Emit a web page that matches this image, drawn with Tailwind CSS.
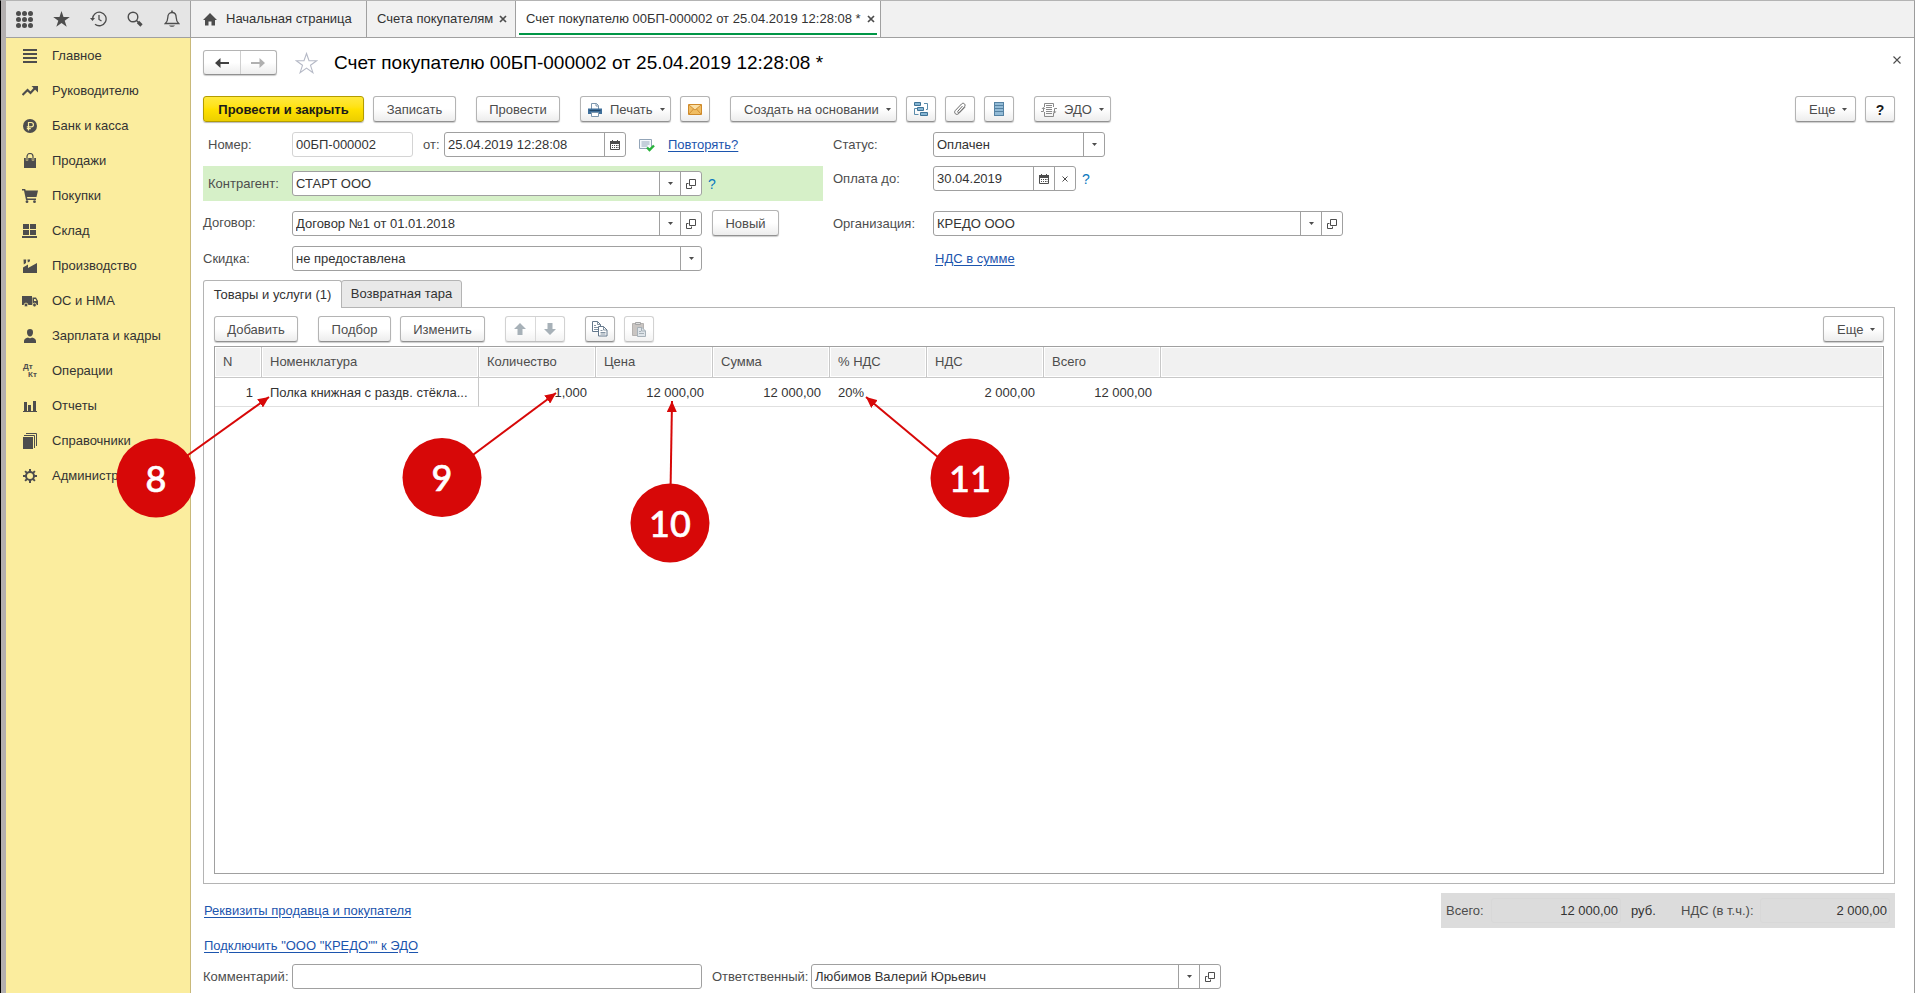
<!DOCTYPE html>
<html lang="ru">
<head>
<meta charset="utf-8">
<meta name="viewport" content="width=device-width, initial-scale=1">
<title>Счет покупателю 00БП-000002</title>
<script src="https://cdn.jsdelivr.net/npm/@tailwindcss/browser@4"></script>
</head>
<body class="bg-white font-['Liberation_Sans',Arial,sans-serif] text-[13px] leading-4 text-[#4d4d4d]">

<!-- Shared icons -->
<svg class="hidden" aria-hidden="true">
  <symbol id="caret" viewBox="0 0 5 3"><path d="M0 0h5L2.500 3z" fill="#4d4d4d"/></symbol>
  <symbol id="open" viewBox="0 0 10 10"><path d="M3.500.5h6v6h-6zM2.500 4.500h-2v5h5v-2" fill="none" stroke="#4d4d4d"/></symbol>
  <symbol id="calendar" viewBox="0 0 10 10"><path d="M.5 2h9v7.500h-9z" fill="none" stroke="#4d4d4d"/><path d="M0 1h10v3H0zM2 0h1v2H2zM7 0h1v2H7zM2 5h1v1H2zm2 0h1v1H4zm2 0h1v1H6zM2 7h1v1H2zm2 0h1v1H4zm2 0h1v1H6zm1.500-2h1v1h-1zm0 2h1v1h-1z" fill="#4d4d4d"/></symbol>
  <symbol id="cross" viewBox="0 0 8 8"><path d="M1 1l6 6M7 1L1 7" fill="none" stroke="#4d4d4d" stroke-width="1.700"/></symbol>
</svg>

<div class="relative flex min-h-screen flex-col border-t border-r border-l border-t-[#b4b4b4] border-r-[#9c9c9c] border-l-black">
<div class="flex flex-1 flex-col border-l-[5px] border-[#b3afaf]">

  <!-- Top bar -->
  <header class="flex h-[37px] border-b border-[#a0a0a0] bg-[#f1f1f1] text-[#333]">
    <div class="flex w-[185px] shrink-0 border-r border-[#a0a0a0] bg-[#e5e5e5]">
      <button class="flex w-[37px] items-center justify-center" aria-label="Меню">
        <svg width="17" height="17" viewBox="0 0 17 17" fill="#4d4d4d"><circle cx="2.500" cy="2.500" r="2.500"/><circle cx="8.500" cy="2.500" r="2.500"/><circle cx="14.500" cy="2.500" r="2.500"/><circle cx="2.500" cy="8.500" r="2.500"/><circle cx="8.500" cy="8.500" r="2.500"/><circle cx="14.500" cy="8.500" r="2.500"/><circle cx="2.500" cy="14.500" r="2.500"/><circle cx="8.500" cy="14.500" r="2.500"/><circle cx="14.500" cy="14.500" r="2.500"/></svg>
      </button>
      <button class="flex w-[37px] items-center justify-center" aria-label="Избранное">
        <svg width="17" height="16" viewBox="0 0 17 16"><path d="M8.500 0l2 6h6.300l-5.100 3.700 2 6.100-5.200-3.800-5.200 3.800 2-6.100L.2 6h6.300z" fill="#4d4d4d"/></svg>
      </button>
      <button class="flex w-[36px] items-center justify-center" aria-label="История">
        <svg width="17" height="16" viewBox="0 0 17 16" fill="none" stroke="#4d4d4d"><path d="M2.500 8A6.800 6.800 0 1 1 5 13.200" stroke-width="1.300"/><path d="M9 4v4.500l2.500 1.500" stroke-width="1.300"/><path d="M0 7h5L2.500 10z" fill="#4d4d4d" stroke="none"/></svg>
      </button>
      <button class="flex w-[37px] items-center justify-center" aria-label="Поиск">
        <svg width="16" height="16" viewBox="0 0 16 16" fill="none" stroke="#4d4d4d"><circle cx="6" cy="6" r="4.800" stroke-width="1.400"/><path d="M9.500 9.500l2 2" stroke-width="1.500"/><path d="M11 11l3.500 3.500" stroke-width="3.200"/></svg>
      </button>
      <button class="flex w-[37px] items-center justify-center" aria-label="Уведомления">
        <svg width="16" height="18" viewBox="0 0 16 18"><path d="M1.300 13.500c1.800-1.800 2.500-3 2.500-6 0-3 1.700-5 4.200-5s4.200 2 4.200 5c0 3 .7 4.200 2.500 6z" fill="none" stroke="#4d4d4d" stroke-width="1.300"/><path d="M7.200.5h1.600v2H7.200zM5 15.500h6c-1 1.700-5 1.700-6 0z" fill="#4d4d4d"/></svg>
      </button>
    </div>
    <nav class="flex">
      <a href="#" class="flex w-[176px] items-center border-r border-[#a0a0a0] pl-3">
        <svg class="mr-[9px]" width="14" height="13" viewBox="0 0 14 13"><path d="M7 0l7 7h-2v5.500H8.500v-4h-3v4H2V7H0z" fill="#4d4d4d"/></svg>
        Начальная страница
      </a>
      <div class="flex w-[149px] items-center border-r border-[#a0a0a0] pl-[10px]">
        <a href="#" class="whitespace-nowrap">Счета покупателям</a>
        <button class="ml-[6px]" aria-label="Закрыть вкладку"><svg width="8" height="8"><use href="#cross"/></svg></button>
      </div>
      <div class="relative flex w-[365px] items-center border-r border-[#a0a0a0] bg-white pl-[10px]">
        <a href="#" class="whitespace-nowrap">Счет покупателю 00БП-000002 от 25.04.2019 12:28:08 *</a>
        <button class="ml-[6px]" aria-label="Закрыть вкладку"><svg width="8" height="8"><use href="#cross"/></svg></button>
        <span class="absolute inset-x-[3px] bottom-[2px] h-[2px] bg-[#009646]"></span>
      </div>
    </nav>
  </header>

  <div class="flex flex-1">

    <!-- Sections -->
    <aside class="w-[185px] shrink-0 border-r border-[#c9b97a] bg-[#fbed9e] text-[#333]">
      <nav class="flex flex-col">
        <a href="#" class="flex h-[35px] items-center gap-[14px] pl-4"><svg width="16" height="16" viewBox="0 0 16 16" fill="#4d4d4d"><path d="M1 1h14v2H1zM1 5h14v2H1zM1 9h14v2H1zM1 13h14v2H1z"/></svg>Главное</a>
        <a href="#" class="flex h-[35px] items-center gap-[14px] pl-4"><svg width="16" height="16" viewBox="0 0 16 16"><path d="M.5 12l5-5 3 3 5-5.500" fill="none" stroke="#4d4d4d" stroke-width="2.200"/><path d="M9.500 3H16v6.500z" fill="#4d4d4d"/></svg>Руководителю</a>
        <a href="#" class="flex h-[35px] items-center gap-[14px] pl-4"><svg width="16" height="16" viewBox="0 0 16 16"><circle cx="8" cy="8" r="7" fill="#4d4d4d"/><path d="M6.500 12.500v-8h2.700a2.200 2.200 0 0 1 0 4.400H4.800M4.800 10.700h4" fill="none" stroke="#fbed9e" stroke-width="1.200"/></svg>Банк и касса</a>
        <a href="#" class="flex h-[35px] items-center gap-[14px] pl-4"><svg width="16" height="16" viewBox="0 0 16 16"><path d="M2 5h12v10H2z" fill="#4d4d4d"/><path d="M5 7.500V3.500a3 3 0 0 1 6 0v4" fill="none" stroke="#fbed9e" stroke-width="2.400"/><path d="M5 7V3.500a3 3 0 0 1 6 0V7" fill="none" stroke="#4d4d4d" stroke-width="1.200"/></svg>Продажи</a>
        <a href="#" class="flex h-[35px] items-center gap-[14px] pl-4"><svg width="16" height="16" viewBox="0 0 16 16" fill="#4d4d4d"><path d="M0 1h3.200l.5 1.500H16L14.500 9H5l.4 1.500H14V12H4L2 2.500H0z"/><circle cx="5" cy="13.700" r="1.400"/><circle cx="12.500" cy="13.700" r="1.400"/></svg>Покупки</a>
        <a href="#" class="flex h-[35px] items-center gap-[14px] pl-4"><svg width="16" height="16" viewBox="0 0 16 16" fill="#4d4d4d"><path d="M1 1h6v5H1zM8 1h6v5H8zM1 7h6v5H1zM8 7h6v5H8zM0 13h15v2H0z"/></svg>Склад</a>
        <a href="#" class="flex h-[35px] items-center gap-[14px] pl-4"><svg width="16" height="16" viewBox="0 0 16 16" fill="#4d4d4d"><path d="M1 15V9.500l5-3V10l9-5v10zM1.500 1.500h2.700L4 5 1.800 6.500zM5.500 1.500h2.600L7.800 3.500 5.800 4.500z"/></svg>Производство</a>
        <a href="#" class="flex h-[35px] items-center gap-[14px] pl-4"><svg width="16" height="16" viewBox="0 0 16 16"><path d="M0 3h10v9H0zM10.500 4.500H14l2 3.500v4h-5.500z" fill="#4d4d4d"/><path d="M12 6h1.500l1 2H12z" fill="#fbed9e"/><circle cx="4" cy="12" r="1.900" fill="#4d4d4d" stroke="#fbed9e" stroke-width=".8"/><circle cx="12.500" cy="12" r="1.900" fill="#4d4d4d" stroke="#fbed9e" stroke-width=".8"/></svg>ОС и НМА</a>
        <a href="#" class="flex h-[35px] items-center gap-[14px] pl-4"><svg width="16" height="16" viewBox="0 0 16 16" fill="#4d4d4d"><path d="M8 1c2 0 3 1.200 3 3.200C11 6.500 9.800 8.500 8 8.500S5 6.500 5 4.200C5 2.200 6 1 8 1zM2 15v-2c0-2 1.800-3 4-3.500 1 1 3 1 4 0 2.200.5 4 1.500 4 3.500v2z"/></svg>Зарплата и кадры</a>
        <a href="#" class="flex h-[35px] items-center gap-[14px] pl-4"><span class="flex h-4 w-4 flex-col text-[8px] leading-[8px] font-bold text-[#4d4d4d]" aria-hidden="true"><span class="pl-px">Дт</span><span class="pl-[6px]">Кт</span></span>Операции</a>
        <a href="#" class="flex h-[35px] items-center gap-[14px] pl-4"><svg width="16" height="16" viewBox="0 0 16 16" fill="#4d4d4d"><path d="M1 13h14v1H1zM2 4h3v9H2zM6 7h3v6H6zM11 3h3v10h-3z"/></svg>Отчеты</a>
        <a href="#" class="flex h-[35px] items-center gap-[14px] pl-4"><svg width="16" height="16" viewBox="0 0 16 16"><path d="M1 4h10v12H1z" fill="#4d4d4d"/><path d="M2 2.500h10.500V15M4 .5h10.500V13" fill="none" stroke="#4d4d4d"/></svg>Справочники</a>
        <a href="#" class="flex h-[35px] items-center gap-[14px] pl-4"><svg width="16" height="16" viewBox="0 0 16 16" fill="none" stroke="#4d4d4d"><circle cx="8" cy="8" r="4" stroke-width="2"/><path d="M8 1v3M8 12v3M1 8h3M12 8h3M3.100 3.100l2 2M10.900 10.900l2 2M3.100 12.900l2-2M10.900 5.100l2-2" stroke-width="2"/></svg>Администрирование</a>
      </nav>
    </aside>

    <main class="flex min-w-0 flex-1 flex-col pt-3 pr-[19px] pb-1 pl-3">

      <!-- Title -->
      <div class="flex h-[25px] items-center">
        <div class="flex h-[25px] w-[74px] rounded-[3px] border border-[#b4b4b4] border-b-[#919191] bg-linear-to-b from-white from-50% to-[#ededed] shadow-[0_1px_1px_#ccc]">
          <button class="flex flex-1 items-center justify-center border-r border-[#cfcfcf]" aria-label="Назад"><svg width="14" height="10" viewBox="0 0 14 10"><path d="M14 4H5.500V0L0 5l5.500 5V6H14z" fill="#404040"/></svg></button>
          <button class="flex flex-1 items-center justify-center" aria-label="Вперед"><svg width="14" height="10" viewBox="0 0 14 10"><path d="M0 4h8.500V0L14 5l-5.500 5V6H0z" fill="#b0b0b0"/></svg></button>
        </div>
        <button class="ml-[18px]" aria-label="В избранное"><svg width="23" height="22" viewBox="0 0 23 22"><path d="M11.500 1.500l2.500 7.200h7.700l-6.200 4.600 2.400 7.400-6.400-4.600-6.400 4.600 2.400-7.400L1.300 8.700H9z" fill="none" stroke="#b5b9c6" stroke-width="1.100"/></svg></button>
        <h1 class="ml-4 pt-px text-[19px] leading-6 text-black">Счет покупателю 00БП-000002 от 25.04.2019 12:28:08 *</h1>
        <button class="-mr-[10px] ml-auto flex h-[19px] w-4 items-center justify-center self-start" aria-label="Закрыть"><svg width="8" height="8" viewBox="0 0 8 8"><path d="M.5.5l7 7M7.500.5l-7 7" stroke="#4d4d4d" stroke-width="1.100"/></svg></button>
      </div>

      <!-- Commands -->
      <div class="mt-[21px] flex h-[26px] items-stretch">
        <button class="w-[161px] rounded-[3px] border border-[#b39c00] bg-linear-to-b from-[#ffe93b] via-[#ffe100] to-[#eccf00] pt-px font-bold text-[#1a1a1a] shadow-[0_1px_1px_#bbb]">Провести и закрыть</button>
        <button class="ml-[9px] w-[83px] rounded-[3px] border border-[#b4b4b4] border-b-[#919191] bg-linear-to-b from-white from-50% to-[#ededed] pt-px shadow-[0_1px_1px_#ccc]">Записать</button>
        <button class="ml-5 w-[84px] rounded-[3px] border border-[#b4b4b4] border-b-[#919191] bg-linear-to-b from-white from-50% to-[#ededed] pt-px shadow-[0_1px_1px_#ccc]">Провести</button>
        <button class="ml-5 flex w-[91px] items-center rounded-[3px] border border-[#b4b4b4] border-b-[#919191] bg-linear-to-b from-white from-50% to-[#ededed] pt-px pl-[7px] shadow-[0_1px_1px_#ccc]">
          <svg class="mr-2" width="14" height="14" viewBox="0 0 14 14"><path d="M3.500 6V.5h5l2 2V6" fill="#fff" stroke="#7d96ad"/><path d="M8 .5V3h2.500" fill="none" stroke="#7d96ad"/><path d="M0 5.500h14V11H0z" fill="#3f6f9b"/><path d="M1.500 7h11v1h-11z" fill="#1f4568"/><path d="M3.500 9.500h7v4h-7z" fill="#fff" stroke="#7d96ad"/></svg>
          Печать
          <svg class="ml-[7px]" width="5" height="3"><use href="#caret"/></svg>
        </button>
        <button class="ml-[9px] flex w-[30px] items-center justify-center rounded-[3px] border border-[#b4b4b4] border-b-[#919191] bg-linear-to-b from-white from-50% to-[#ededed] shadow-[0_1px_1px_#ccc]" aria-label="Отправить по почте"><svg width="14" height="11" viewBox="0 0 14 11"><path d="M.5.5h13v10H.5z" fill="#f0bd62" stroke="#cf8a2a"/><path d="M1 1l6 5 6-5z" fill="#fbe0a6"/><path d="M1 1l6 5 6-5M1 10l4.500-5M13 10L8.500 5" fill="none" stroke="#c98328" stroke-width=".8"/></svg></button>
        <button class="ml-5 flex w-[167px] items-center rounded-[3px] border border-[#b4b4b4] border-b-[#919191] bg-linear-to-b from-white from-50% to-[#ededed] pt-px pl-[13px] whitespace-nowrap shadow-[0_1px_1px_#ccc]">Создать на основании<svg class="ml-[7px]" width="5" height="3"><use href="#caret"/></svg></button>
        <button class="ml-[9px] flex w-[30px] items-center justify-center rounded-[3px] border border-[#b4b4b4] border-b-[#919191] bg-linear-to-b from-white from-50% to-[#ededed] shadow-[0_1px_1px_#ccc]" aria-label="Структура подчиненности"><svg width="14" height="14" viewBox="0 0 14 14" fill="none" stroke="#3e7397"><path d="M3 6.500H.5v6h4M10 1.500h3.500v6H12" stroke="#5b8cab"/><path d="M.5.500h6v3h-6zM3.500 5.500h6v3h-6zM6.500 10.500h7v3h-7z" fill="#86b5d2"/></svg></button>
        <button class="ml-[9px] flex w-[30px] items-center justify-center rounded-[3px] border border-[#b4b4b4] border-b-[#919191] bg-linear-to-b from-white from-50% to-[#ededed] shadow-[0_1px_1px_#ccc]" aria-label="Присоединенные файлы"><svg width="14" height="14" viewBox="0 0 14 14"><path d="M9.500 4L5 9c-1 1.200.4 2.400 1.400 1.300L11.500 4.800c1.700-2-.8-4.800-2.900-2.900L2.300 8.500c-1.900 2.300.8 5.200 3.300 3.200l6.400-6.500" fill="none" stroke="#6a6a6a"/></svg></button>
        <button class="ml-[9px] flex w-[30px] items-center justify-center rounded-[3px] border border-[#b4b4b4] border-b-[#919191] bg-linear-to-b from-white from-50% to-[#ededed] shadow-[0_1px_1px_#ccc]" aria-label="Движения документа"><svg width="10" height="14" viewBox="0 0 10 14"><path d="M0 0h10v14H0z" fill="#5582a3"/><path d="M1 1h8v2H1zM1 4h8v2H1zM1 7h8v2H1zM1 10h8v3H1z" fill="#93bbd6"/></svg></button>
        <button class="ml-5 flex w-[77px] items-center rounded-[3px] border border-[#b4b4b4] border-b-[#919191] bg-linear-to-b from-white from-50% to-[#ededed] pt-px pl-[6px] shadow-[0_1px_1px_#ccc]">
          <svg class="mr-[7px]" width="16" height="14" viewBox="0 0 16 14" fill="none" stroke="#8a8a8a"><path d="M3.500 4V.5h9V4M3.500 9v4.500h9V10M5 2.500h6M5 4.500h6M5 6.500h6M5 8.500h6M5 10.500h6M2.500 5v3.500H0M13.500 9V5.500H16"/><path d="M.5 6l2-2 2 2zM11.500 8.500l2 2 2-2z" fill="#8a8a8a" stroke="none"/></svg>
          ЭДО
          <svg class="ml-[7px]" width="5" height="3"><use href="#caret"/></svg>
        </button>
        <button class="ml-auto flex w-[61px] items-center rounded-[3px] border border-[#b4b4b4] border-b-[#919191] bg-linear-to-b from-white from-50% to-[#ededed] pt-px pl-[13px] shadow-[0_1px_1px_#ccc]">Еще<svg class="ml-[7px]" width="5" height="3"><use href="#caret"/></svg></button>
        <button class="ml-[9px] w-[30px] rounded-[3px] border border-[#b4b4b4] border-b-[#919191] bg-linear-to-b from-white from-50% to-[#ededed] pt-px text-[14px] font-bold text-[#1a1a1a] shadow-[0_1px_1px_#ccc]">?</button>
      </div>

      <!-- Document fields -->
      <div class="mt-[10px] flex">
        <div class="w-[620px] shrink-0">
          <div class="flex h-[25px] items-center">
            <label for="number" class="w-[89px] pl-[5px]">Номер:</label>
            <input id="number" value="00БП-000002" class="h-[25px] w-[121px] rounded-[3px] border border-[#d4d4d4] pl-[3px] text-[#333]">
            <label for="date" class="w-[31px] pl-[10px]">от:</label>
            <div class="flex h-[25px] w-[182px] rounded-[3px] border border-[#a0a0a0]">
              <input id="date" value="25.04.2019 12:28:08" class="min-w-0 flex-1 pl-[3px] text-[#333]">
              <button class="flex w-[21px] items-center justify-center border-l border-[#a0a0a0]" aria-label="Выбрать дату"><svg width="10" height="10"><use href="#calendar"/></svg></button>
            </div>
            <svg class="ml-[13px]" width="16" height="14" viewBox="0 0 16 14"><path d="M.5 1.500h12v9H.5z" fill="#f5f8fb" stroke="#93a5b8"/><path d="M2.500 4h8M2.500 6h8M2.500 8h6" stroke="#93a5b8"/><path d="M8 9.500l2.500 2.500L15 7.500" fill="none" stroke="#27b33a" stroke-width="2.400"/></svg>
            <a href="#" class="ml-[13px] text-[#1c55ae] underline underline-offset-2">Повторять?</a>
          </div>
          <div class="mt-[9px] flex h-[35px] items-center bg-[#d6f0c8]">
            <label for="partner" class="w-[89px] pl-[5px]">Контрагент:</label>
            <div class="flex h-[25px] w-[410px] rounded-[3px] border border-[#a0a0a0] bg-white">
              <select id="partner" class="min-w-0 flex-1 appearance-none pl-[3px] text-[#333]"><option>СТАРТ ООО</option></select>
              <span class="pointer-events-none flex w-[21px] items-center justify-center border-l border-[#a0a0a0]"><svg width="5" height="3"><use href="#caret"/></svg></span>
              <button class="flex w-[21px] items-center justify-center border-l border-[#a0a0a0]" aria-label="Открыть контрагента"><svg width="10" height="10"><use href="#open"/></svg></button>
            </div>
            <button class="ml-[6px] text-[14px] text-[#0a78be]">?</button>
          </div>
          <div class="mt-[9px] flex h-[26px] items-end">
            <label for="contract" class="w-[89px] self-center">Договор:</label>
            <div class="flex h-[25px] w-[410px] rounded-[3px] border border-[#a0a0a0]">
              <select id="contract" class="min-w-0 flex-1 appearance-none pl-[3px] text-[#333]"><option>Договор №1 от 01.01.2018</option></select>
              <span class="pointer-events-none flex w-[21px] items-center justify-center border-l border-[#a0a0a0]"><svg width="5" height="3"><use href="#caret"/></svg></span>
              <button class="flex w-[21px] items-center justify-center border-l border-[#a0a0a0]" aria-label="Открыть договор"><svg width="10" height="10"><use href="#open"/></svg></button>
            </div>
            <button class="ml-[10px] h-[26px] w-[67px] rounded-[3px] border border-[#b4b4b4] border-b-[#919191] bg-linear-to-b from-white from-50% to-[#ededed] pt-px shadow-[0_1px_1px_#ccc]">Новый</button>
          </div>
          <div class="mt-[10px] flex h-[25px] items-center">
            <label for="discount" class="w-[89px]">Скидка:</label>
            <div class="flex h-[25px] w-[410px] rounded-[3px] border border-[#a0a0a0]">
              <select id="discount" class="min-w-0 flex-1 appearance-none pl-[3px] text-[#333]"><option>не предоставлена</option></select>
              <span class="pointer-events-none flex w-[21px] items-center justify-center border-l border-[#a0a0a0]"><svg width="5" height="3"><use href="#caret"/></svg></span>
            </div>
          </div>
        </div>

        <div class="ml-[10px]">
          <div class="flex h-[25px] items-center">
            <label for="status" class="w-[100px]">Статус:</label>
            <div class="flex h-[25px] w-[172px] rounded-[3px] border border-[#a0a0a0]">
              <select id="status" class="min-w-0 flex-1 appearance-none pl-[3px] text-[#333]"><option>Оплачен</option></select>
              <span class="pointer-events-none flex w-[21px] items-center justify-center border-l border-[#a0a0a0]"><svg width="5" height="3"><use href="#caret"/></svg></span>
            </div>
          </div>
          <div class="mt-[9px] flex h-[25px] items-center">
            <label for="due" class="w-[100px]">Оплата до:</label>
            <div class="flex h-[25px] w-[143px] rounded-[3px] border border-[#a0a0a0]">
              <input id="due" value="30.04.2019" class="min-w-0 flex-1 pl-[3px] text-[#333]">
              <button class="flex w-[21px] items-center justify-center border-l border-[#a0a0a0]" aria-label="Выбрать дату"><svg width="10" height="10"><use href="#calendar"/></svg></button>
              <button class="flex w-[21px] items-center justify-center border-l border-[#a0a0a0]" aria-label="Очистить"><svg width="6" height="6" viewBox="0 0 6 6"><path d="M.5.500l5 5M5.500.500l-5 5" stroke="#4d4d4d"/></svg></button>
            </div>
            <button class="ml-[6px] text-[14px] text-[#0a78be]">?</button>
          </div>
          <div class="mt-5 flex h-[25px] items-center">
            <label for="company" class="w-[100px]">Организация:</label>
            <div class="flex h-[25px] w-[410px] rounded-[3px] border border-[#a0a0a0]">
              <select id="company" class="min-w-0 flex-1 appearance-none pl-[3px] text-[#333]"><option>КРЕДО ООО</option></select>
              <span class="pointer-events-none flex w-[21px] items-center justify-center border-l border-[#a0a0a0]"><svg width="5" height="3"><use href="#caret"/></svg></span>
              <button class="flex w-[21px] items-center justify-center border-l border-[#a0a0a0]" aria-label="Открыть организацию"><svg width="10" height="10"><use href="#open"/></svg></button>
            </div>
          </div>
          <div class="mt-[10px] flex h-[25px] items-center pl-[102px]">
            <a href="#" class="text-[#1c55ae] underline underline-offset-2">НДС в сумме</a>
          </div>
        </div>
      </div>

      <!-- Tabs -->
      <div class="relative z-10 mt-[9px] -mb-px flex h-7" role="tablist">
        <button role="tab" aria-selected="true" class="w-[139px] rounded-t-[3px] border border-b-0 border-[#b4b4b4] bg-white whitespace-nowrap text-[#333]">Товары и услуги (1)</button>
        <button role="tab" aria-selected="false" class="-ml-px w-[121px] rounded-t-[3px] border border-[#b4b4b4] bg-[#e9e9e9] text-[#333]">Возвратная тара</button>
      </div>
      <section class="flex flex-1 flex-col border border-[#b4b4b4] px-[10px] pt-2 pb-[9px]">
        <div class="flex h-[26px] items-stretch">
          <button class="w-[84px] rounded-[3px] border border-[#b4b4b4] border-b-[#919191] bg-linear-to-b from-white from-50% to-[#ededed] pt-px shadow-[0_1px_1px_#ccc]">Добавить</button>
          <button class="ml-5 w-[73px] rounded-[3px] border border-[#b4b4b4] border-b-[#919191] bg-linear-to-b from-white from-50% to-[#ededed] pt-px shadow-[0_1px_1px_#ccc]">Подбор</button>
          <button class="ml-[9px] w-[85px] rounded-[3px] border border-[#b4b4b4] border-b-[#919191] bg-linear-to-b from-white from-50% to-[#ededed] pt-px shadow-[0_1px_1px_#ccc]">Изменить</button>
          <div class="ml-5 flex w-[60px] rounded-[3px] border border-[#d2d2d2] border-b-[#c0c0c0] bg-linear-to-b from-white from-50% to-[#f2f2f2] shadow-[0_1px_1px_#ddd]">
            <button class="flex flex-1 items-center justify-center border-r border-[#d9d9d9]" aria-label="Вверх"><svg width="12" height="12" viewBox="0 0 12 12"><path d="M6 0l6 6H8.500v6h-5V6H0z" fill="#a7b1b8"/></svg></button>
            <button class="flex flex-1 items-center justify-center" aria-label="Вниз"><svg width="12" height="12" viewBox="0 0 12 12"><path d="M6 12L0 6h3.500V0h5v6H12z" fill="#a7b1b8"/></svg></button>
          </div>
          <button class="ml-5 flex w-[30px] items-center justify-center rounded-[3px] border border-[#b4b4b4] border-b-[#919191] bg-linear-to-b from-white from-50% to-[#ededed] shadow-[0_1px_1px_#ccc]" aria-label="Копировать"><svg width="16" height="16" viewBox="0 0 16 16" fill="#fff" stroke="#64788c"><path d="M.5.500h5l3 3v7h-8z"/><path d="M5.500.500v3h3M2 4.500h2M2 6.500h4M2 8.500h4" fill="none" stroke-width=".8"/><path d="M6.500 5.500h5l3.500 3.500v6H6.500z"/><path d="M11.500 5.500V9H15M8.500 9.500h2M8.500 11.500h5M8.500 13h5" fill="none" stroke-width=".8"/></svg></button>
          <button class="ml-[9px] flex w-[30px] items-center justify-center rounded-[3px] border border-[#d2d2d2] border-b-[#c0c0c0] bg-linear-to-b from-white from-50% to-[#f2f2f2] shadow-[0_1px_1px_#ddd]" aria-label="Вставить"><svg width="14" height="15" viewBox="0 0 14 15"><path d="M.5 1.500h11v12H.5z" fill="#c9c5c2" stroke="#b5b2b0"/><path d="M3.500.500h5v2h-5z" fill="#dedede" stroke="#a5a5a5"/><path d="M5.500 5.500h4.500l3.500 3.500v5.500h-8z" fill="#dfe5ea" stroke="#a7b1b8"/><path d="M9.500 5.500V9h4M7 9.500h2M7 11.500h5" fill="none" stroke="#a7b1b8"/></svg></button>
          <button class="ml-auto flex w-[61px] items-center rounded-[3px] border border-[#b4b4b4] border-b-[#919191] bg-linear-to-b from-white from-50% to-[#ededed] pt-px pl-[13px] shadow-[0_1px_1px_#ccc]">Еще<svg class="ml-[7px]" width="5" height="3"><use href="#caret"/></svg></button>
        </div>

        <div class="mt-1 flex-1 border border-[#a0a0a0]">
          <table class="w-full table-fixed border-separate border-spacing-0 whitespace-nowrap">
            <colgroup><col class="w-[47px]"><col class="w-[217px]"><col class="w-[117px]"><col class="w-[117px]"><col class="w-[117px]"><col class="w-[97px]"><col class="w-[117px]"><col class="w-[117px]"><col></colgroup>
            <thead>
              <tr class="h-[31px] bg-[#f1f1f1] text-left">
                <th class="border-r border-b border-[#c8c8c8] px-2 font-normal shadow-[inset_0_0_0_1px_#fff]">N</th>
                <th class="border-r border-b border-[#c8c8c8] px-2 font-normal shadow-[inset_0_0_0_1px_#fff]">Номенклатура</th>
                <th class="border-r border-b border-[#c8c8c8] px-2 font-normal shadow-[inset_0_0_0_1px_#fff]">Количество</th>
                <th class="border-r border-b border-[#c8c8c8] px-2 font-normal shadow-[inset_0_0_0_1px_#fff]">Цена</th>
                <th class="border-r border-b border-[#c8c8c8] px-2 font-normal shadow-[inset_0_0_0_1px_#fff]">Сумма</th>
                <th class="border-r border-b border-[#c8c8c8] px-2 font-normal shadow-[inset_0_0_0_1px_#fff]">% НДС</th>
                <th class="border-r border-b border-[#c8c8c8] px-2 font-normal shadow-[inset_0_0_0_1px_#fff]">НДС</th>
                <th class="border-r border-b border-[#c8c8c8] px-2 font-normal shadow-[inset_0_0_0_1px_#fff]">Всего</th>
                <th class="border-b border-[#c8c8c8] shadow-[inset_0_0_0_1px_#fff]"></th>
              </tr>
            </thead>
            <tbody>
              <tr class="h-[29px] text-right text-[#333]">
                <td class="border-b border-[#e0e0e0] pt-px pr-[9px]">1</td>
                <td class="border-r border-b border-[#e0e0e0] border-r-[#c8c8c8] pt-px pl-2 text-left">Полка книжная с раздв. стёкла...</td>
                <td class="border-b border-[#e0e0e0] pt-px pr-[9px]">1,000</td>
                <td class="border-b border-[#e0e0e0] pt-px pr-[9px]">12 000,00</td>
                <td class="border-b border-[#e0e0e0] pt-px pr-[9px]">12 000,00</td>
                <td class="border-b border-[#e0e0e0] pt-px pl-2 text-left">20%</td>
                <td class="border-b border-[#e0e0e0] pt-px pr-[9px]">2 000,00</td>
                <td class="border-b border-[#e0e0e0] pt-px pr-[9px]">12 000,00</td>
                <td class="border-b border-[#e0e0e0]"></td>
              </tr>
            </tbody>
          </table>
        </div>
      </section>

      <!-- Totals and footer -->
      <div class="mt-[9px] flex h-[35px] items-center">
        <a href="#" class="ml-px text-[#1c55ae] underline underline-offset-2">Реквизиты продавца и покупателя</a>
        <div class="ml-auto flex h-[35px] w-[454px] items-center bg-[#dcdcdc] pl-[5px]">
          <label for="total" class="w-[45px]">Всего:</label>
          <input id="total" value="12 000,00" readonly class="h-[25px] w-[130px] rounded-[3px] border border-[#d8d8d8] pr-[2px] text-right text-[#333]">
          <span class="w-[60px] pl-[10px] text-[#333]">руб.</span>
          <label for="vat" class="w-[79px]">НДС (в т.ч.):</label>
          <input id="vat" value="2 000,00" readonly class="h-[25px] w-[130px] rounded-[3px] border border-[#d8d8d8] pr-[2px] text-right text-[#333]">
        </div>
      </div>
      <div class="mt-[10px] flex h-4 items-center">
        <a href="#" class="ml-px text-[#1c55ae] underline underline-offset-2">Подключить "ООО "КРЕДО"" к ЭДО</a>
      </div>
      <div class="mt-[10px] flex h-[25px] items-center">
        <label for="comment" class="w-[89px]">Комментарий:</label>
        <input id="comment" class="h-[25px] w-[410px] rounded-[3px] border border-[#a0a0a0] pl-[3px]">
        <label for="manager" class="w-[109px] pl-[10px]">Ответственный:</label>
        <div class="flex h-[25px] w-[410px] rounded-[3px] border border-[#a0a0a0]">
          <select id="manager" class="min-w-0 flex-1 appearance-none pl-[3px] text-[#333]"><option>Любимов Валерий Юрьевич</option></select>
          <span class="pointer-events-none flex w-[21px] items-center justify-center border-l border-[#a0a0a0]"><svg width="5" height="3"><use href="#caret"/></svg></span>
          <button class="flex w-[21px] items-center justify-center border-l border-[#a0a0a0]" aria-label="Открыть ответственного"><svg width="10" height="10"><use href="#open"/></svg></button>
        </div>
      </div>
    </main>
  </div>
</div>

<!-- Numbered callouts over the first table row -->
<svg class="pointer-events-none absolute -top-px -left-px z-20" width="1020" height="580" viewBox="0 0 1020 580">
  <defs><marker id="tip" markerUnits="userSpaceOnUse" markerWidth="11" markerHeight="10" refX="11" refY="5" orient="auto"><path d="M0 0l11 5-11 5z" fill="#d70808"/></marker></defs>
  <g stroke="#d70808" stroke-width="2">
    <path d="M156 478L269 397" marker-end="url(#tip)"/>
    <path d="M442 478L556 393" marker-end="url(#tip)"/>
    <path d="M670 523L672 401" marker-end="url(#tip)"/>
    <path d="M963 478L866 397" marker-end="url(#tip)"/>
  </g>
  <g fill="#d70808"><circle cx="156" cy="478" r="39.500"/><circle cx="442" cy="477.500" r="39.500"/><circle cx="670" cy="523" r="39.500"/><circle cx="970" cy="478" r="39.500"/></g>
  <g class="font-['Lato',sans-serif] text-[36px] font-medium" fill="#fff" stroke="#fff" stroke-width=".6" text-anchor="middle"><text x="156" y="492">8</text><text x="442" y="491">9</text><text x="670" y="537">10</text><text x="970" y="492">11</text></g>
</svg>
</div>
</body>
</html>
